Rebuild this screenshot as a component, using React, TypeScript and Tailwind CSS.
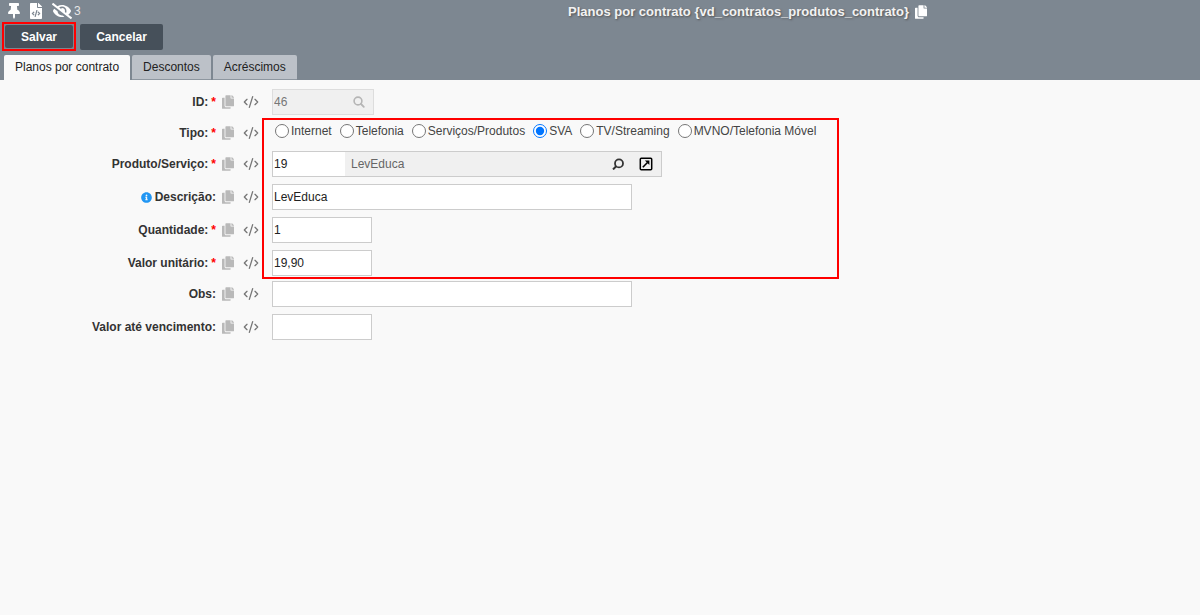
import { useState } from 'react';
import type { ReactNode } from 'react';
import { CodeXml } from 'lucide-react';
import { FaCopy, FaEyeSlash, FaFileCode, FaInfoCircle, FaThumbtack } from 'react-icons/fa';

const tabs = ['Planos por contrato', 'Descontos', 'Acréscimos'];

const tipos = ['Internet', 'Telefonia', 'Serviços/Produtos', 'SVA', 'TV/Streaming', 'MVNO/Telefonia Móvel'];

const inputClass = 'h-[26px] border border-[#ccc] bg-white px-px text-[#222] outline-none';

interface FieldProps {
  label: string;
  htmlFor?: string;
  labelId?: string;
  required?: boolean;
  info?: boolean;
  children: ReactNode;
}

const Field = ({ label, htmlFor, labelId, required, info, children }: FieldProps) => (
  <div className="flex h-[26px]">
    <div className="mr-[13px] flex w-[259px] shrink-0 items-center justify-end">
      {info && <FaInfoCircle className="mr-[3px] size-[11px] text-[#2196f3]" />}
      <label id={labelId} htmlFor={htmlFor} className="font-bold text-[#333]">
        {label}:{required && <span className="ml-[3px] text-[#f00]">*</span>}
      </label>
      <button type="button" aria-label="Copiar campo" className="ml-1.5 text-[#b9b9b9]">
        <FaCopy className="h-[14px] w-[12px]" />
      </button>
      <button type="button" aria-label="Ver código" className="ml-[9px] text-[#777]">
        <CodeXml className="size-4" strokeWidth={2} />
      </button>
    </div>
    {children}
  </div>
);

const SearchIcon = () => (
  <svg viewBox="0 0 12 12" className="size-3" fill="none" stroke="currentColor" strokeLinecap="round">
    <circle cx="5" cy="5" r="3.9" strokeWidth="1.6" />
    <path d="m8 8 2.8 2.8" strokeWidth="1.8" />
  </svg>
);

const LookupIcon = () => (
  <svg viewBox="0 0 12 12" className="size-3" fill="none" stroke="currentColor">
    <circle cx="7" cy="5.4" r="4" strokeWidth="1.8" />
    <path d="M4.2 8.2 1 11.4" strokeWidth="2" />
  </svg>
);

const OpenIcon = () => (
  <svg viewBox="0 0 14 14" className="size-[14px]" fill="none" stroke="currentColor">
    <rect x="1.3" y="1.3" width="11.4" height="11.4" rx="1" strokeWidth="1.5" />
    <path d="M3.8 10.2 8.5 5.5" strokeWidth="1.6" />
    <path d="M5.9 3.6h4.5v4.5z" fill="currentColor" stroke="none" />
  </svg>
);

export default function App() {
  const [activeTab, setActiveTab] = useState(tabs[0]);
  const [tipo, setTipo] = useState('SVA');

  return (
    <div className="min-h-screen bg-[#f9f9f9] font-['Liberation_Sans',Arial,sans-serif] text-xs text-[#444]">
      <header className="bg-[#7d8791]">
        <div className="flex h-[22px] items-center text-white">
          <div className="flex w-[295px] items-center pl-2">
            <button type="button" aria-label="Fixar">
              <FaThumbtack className="h-4 w-3" />
            </button>
            <button type="button" aria-label="Código do formulário" className="ml-2.5">
              <FaFileCode className="h-4 w-3" />
            </button>
            <button type="button" className="ml-2.5 flex items-center gap-[2px] text-[#e6e6e6]">
              <FaEyeSlash className="h-4 w-5 text-white" />3
            </button>
          </div>
          <div className="flex flex-1 items-center justify-center gap-1.5 pt-px">
            <h1 className="text-[13px] leading-4 font-bold text-[#f2f2f2] [text-shadow:1px_1px_2px_#555]">
              Planos por contrato {'{vd_contratos_produtos_contrato}'}
            </h1>
            <button type="button" aria-label="Copiar título">
              <FaCopy className="h-[14px] w-[12px]" />
            </button>
          </div>
        </div>

        <div className="flex gap-1 pl-[2px]">
          <div className="border-2 border-[#f00] p-px">
            <button type="button" className="block h-[23px] w-[68px] rounded-xs bg-[#46505a] font-bold text-white">
              Salvar
            </button>
          </div>
          <button type="button" className="mt-[2px] mb-px w-[83px] rounded-xs bg-[#46505a] font-bold text-white">
            Cancelar
          </button>
        </div>

        <div role="tablist" className="flex gap-[2px] pt-1 pl-1">
          {tabs.map((tab) => (
            <button
              key={tab}
              type="button"
              role="tab"
              aria-selected={tab === activeTab}
              onClick={() => setActiveTab(tab)}
              className={`h-[25px] rounded-t-xs border-b px-[11px] text-[#222] ${
                tab === activeTab ? 'border-[#f9f9f9] bg-[#f9f9f9]' : 'border-[#8d969f] bg-[#bcc1c8]'
              }`}
            >
              {tab}
            </button>
          ))}
        </div>
      </header>

      <form className="pt-[9px]">
        <Field label="ID" htmlFor="id" required>
          <div className="flex w-[102px] items-center border border-[#ddd] bg-[#f0f0f0] pr-2">
            <input id="id" readOnly defaultValue="46" className="min-w-0 flex-1 px-px text-[#777] outline-none" />
            <button type="button" aria-label="Pesquisar ID" className="text-[#b5b5b5]">
              <SearchIcon />
            </button>
          </div>
        </Field>

        <div className="relative mt-[3px] pt-[2px] pb-[3px]">
          <Field label="Tipo" labelId="tipo-label" required>
            <div role="radiogroup" aria-labelledby="tipo-label" className="flex h-[22px] items-center gap-2 pl-[3px]">
              {tipos.map((item) => (
                <label key={item} className="flex items-center gap-[2px] whitespace-nowrap">
                  <input
                    type="radio"
                    name="tipo"
                    value={item}
                    checked={tipo === item}
                    onChange={() => setTipo(item)}
                    className="size-[14px]"
                  />
                  {item}
                </label>
              ))}
            </div>
          </Field>
          <div className="mt-[5px] flex flex-col gap-[7px]">
            <Field label="Produto/Serviço" htmlFor="produto" required>
              <div className="flex w-[390px] items-center border border-[#ccc] bg-[#f0f0f0] pr-2">
                <input id="produto" defaultValue="19" className="h-full w-[72px] bg-white px-px text-[#222] outline-none" />
                <span className="flex-1 pl-1.5 text-[#666]">LevEduca</span>
                <button type="button" aria-label="Pesquisar produto" className="mr-[15px] text-[#333]">
                  <LookupIcon />
                </button>
                <button type="button" aria-label="Abrir produto" className="text-black">
                  <OpenIcon />
                </button>
              </div>
            </Field>
            <Field label="Descrição" htmlFor="descricao" info>
              <input id="descricao" defaultValue="LevEduca" className={`${inputClass} w-[360px]`} />
            </Field>
            <Field label="Quantidade" htmlFor="quantidade" required>
              <input id="quantidade" defaultValue="1" className={`${inputClass} w-[100px]`} />
            </Field>
            <Field label="Valor unitário" htmlFor="valor" required>
              <input id="valor" defaultValue="19,90" className={`${inputClass} w-[100px]`} />
            </Field>
          </div>
          <div className="pointer-events-none absolute inset-y-0 left-[262px] w-[577px] border-2 border-[#f00]" />
        </div>

        <div className="mt-[2px] flex flex-col gap-[7px]">
          <Field label="Obs" htmlFor="obs">
            <input id="obs" className={`${inputClass} w-[360px]`} />
          </Field>
          <Field label="Valor até vencimento" htmlFor="vencimento">
            <input id="vencimento" className={`${inputClass} w-[100px]`} />
          </Field>
        </div>
      </form>
    </div>
  );
}
